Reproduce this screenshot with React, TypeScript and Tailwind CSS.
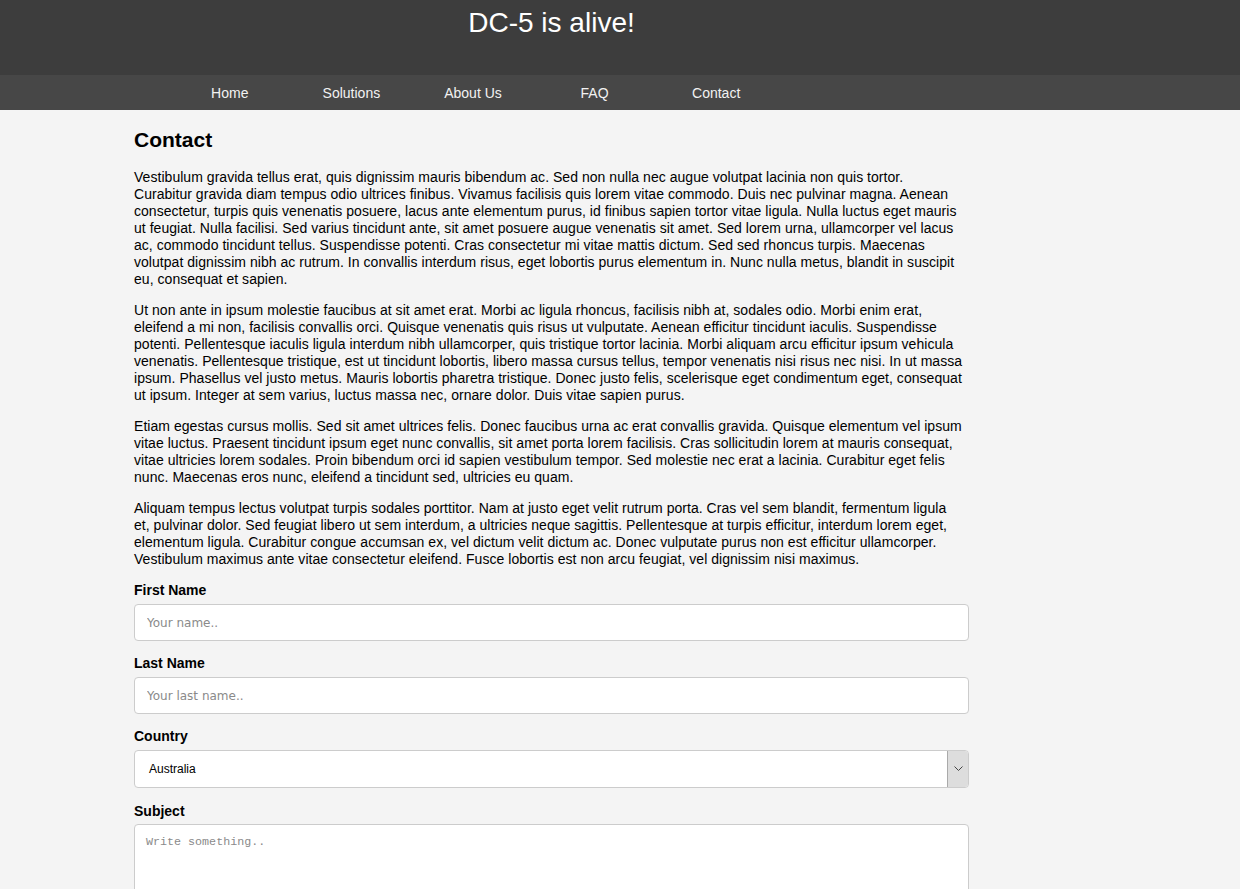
import React from 'react';

const navItems = ['Home', 'Solutions', 'About Us', 'FAQ', 'Contact'];

// paragraphs kept line by line so they wrap like the original page
const paragraphs: string[][] = [
  [
    'Vestibulum gravida tellus erat, quis dignissim mauris bibendum ac. Sed non nulla nec augue volutpat lacinia non quis tortor.',
    'Curabitur gravida diam tempus odio ultrices finibus. Vivamus facilisis quis lorem vitae commodo. Duis nec pulvinar magna. Aenean',
    'consectetur, turpis quis venenatis posuere, lacus ante elementum purus, id finibus sapien tortor vitae ligula. Nulla luctus eget mauris',
    'ut feugiat. Nulla facilisi. Sed varius tincidunt ante, sit amet posuere augue venenatis sit amet. Sed lorem urna, ullamcorper vel lacus',
    'ac, commodo tincidunt tellus. Suspendisse potenti. Cras consectetur mi vitae mattis dictum. Sed sed rhoncus turpis. Maecenas',
    'volutpat dignissim nibh ac rutrum. In convallis interdum risus, eget lobortis purus elementum in. Nunc nulla metus, blandit in suscipit',
    'eu, consequat et sapien.',
  ],
  [
    'Ut non ante in ipsum molestie faucibus at sit amet erat. Morbi ac ligula rhoncus, facilisis nibh at, sodales odio. Morbi enim erat,',
    'eleifend a mi non, facilisis convallis orci. Quisque venenatis quis risus ut vulputate. Aenean efficitur tincidunt iaculis. Suspendisse',
    'potenti. Pellentesque iaculis ligula interdum nibh ullamcorper, quis tristique tortor lacinia. Morbi aliquam arcu efficitur ipsum vehicula',
    'venenatis. Pellentesque tristique, est ut tincidunt lobortis, libero massa cursus tellus, tempor venenatis nisi risus nec nisi. In ut massa',
    'ipsum. Phasellus vel justo metus. Mauris lobortis pharetra tristique. Donec justo felis, scelerisque eget condimentum eget, consequat',
    'ut ipsum. Integer at sem varius, luctus massa nec, ornare dolor. Duis vitae sapien purus.',
  ],
  [
    'Etiam egestas cursus mollis. Sed sit amet ultrices felis. Donec faucibus urna ac erat convallis gravida. Quisque elementum vel ipsum',
    'vitae luctus. Praesent tincidunt ipsum eget nunc convallis, sit amet porta lorem facilisis. Cras sollicitudin lorem at mauris consequat,',
    'vitae ultricies lorem sodales. Proin bibendum orci id sapien vestibulum tempor. Sed molestie nec erat a lacinia. Curabitur eget felis',
    'nunc. Maecenas eros nunc, eleifend a tincidunt sed, ultricies eu quam.',
  ],
  [
    'Aliquam tempus lectus volutpat turpis sodales porttitor. Nam at justo eget velit rutrum porta. Cras vel sem blandit, fermentum ligula',
    'et, pulvinar dolor. Sed feugiat libero ut sem interdum, a ultricies neque sagittis. Pellentesque at turpis efficitur, interdum lorem eget,',
    'elementum ligula. Curabitur congue accumsan ex, vel dictum velit dictum ac. Donec vulputate purus non est efficitur ullamcorper.',
    'Vestibulum maximus ante vitae consectetur eleifend. Fusce lobortis est non arcu feugiat, vel dignissim nisi maximus.',
  ],
];

// form label
const Label = ({ children, tight }: { children: React.ReactNode; tight?: boolean }) => (
  <label className={`block text-[14px] font-bold leading-[17px] text-black ${tight ? 'mb-[4px]' : 'mb-[5px]'}`}>
    {children}
  </label>
);

export default function App() {
  return (
    <div className="min-h-[889px] bg-[#f4f4f4] font-['Liberation_Sans',Arial,sans-serif] text-black">
      <header className="h-[75px] bg-[#3d3d3d]">
        <div className="w-[835px] ml-[134px] text-center pt-[6px]">
          <h1 className="text-[28px] leading-[34px] text-white">DC-5 is alive!</h1>
        </div>
      </header>
      <nav className="h-[35px] bg-[#474747]">
        <ul className="flex ml-[169px] h-full items-center pt-[2px]">
          {navItems.map(item => (
            <li key={item} className="w-[121.6px] text-center text-[14px] text-[#f2f2f2]">
              {item}
            </li>
          ))}
        </ul>
      </nav>

      <main className="w-[835px] ml-[134px] pt-[18px]">
        <h2 className="text-[21px] font-bold leading-[24px] mb-[17px]">Contact</h2>
        {paragraphs.map((lines, i) => (
          <p key={i} className="whitespace-nowrap text-[14px] tracking-[0.04px] leading-[17px] mb-[14px] last:mb-0">
            {lines.map((line, j) => (
              <React.Fragment key={j}>
                {line}
                {j < lines.length - 1 && <br />}
              </React.Fragment>
            ))}
          </p>
        ))}

        <form className="mt-[14px]">
          <Label>First Name</Label>
          <input
            placeholder="Your name.."
            className="block w-full h-[37px] px-[12px] bg-white border border-[#cccccc] rounded-[4px] text-[12px] font-['DejaVu_Sans',Tahoma,sans-serif] placeholder:text-[#8a8a8a] mb-[14px]"
          />
          <Label>Last Name</Label>
          <input
            placeholder="Your last name.."
            className="block w-full h-[37px] px-[12px] bg-white border border-[#cccccc] rounded-[4px] text-[12px] font-['DejaVu_Sans',Tahoma,sans-serif] placeholder:text-[#8a8a8a] mb-[14px]"
          />
          <Label>Country</Label>
          <div className="flex h-[38px] bg-white border border-[#cccccc] rounded-[4px] mb-[15px]">
            <div className="flex-1 flex items-center pl-[14px] text-[12px]">Australia</div>
            <div className="w-[21px] flex items-center justify-center bg-[#dddddd] border-l border-[#aaaaaa] rounded-r-[3px]">
              <svg width="9" height="6" viewBox="0 0 9 6" fill="none">
                <path d="M0.5 0.5 L4.5 4.5 L8.5 0.5" stroke="#444" strokeWidth="1" />
              </svg>
            </div>
          </div>
          <Label tight>Subject</Label>
          <textarea
            placeholder="Write something.."
            className="block w-full h-[200px] px-[11px] py-[9px] bg-white border border-[#cccccc] rounded-[4px] text-[11.7px] font-['Liberation_Mono',monospace] placeholder:text-[#8a8a8a] resize-none"
          />
        </form>
      </main>
    </div>
  );
}
